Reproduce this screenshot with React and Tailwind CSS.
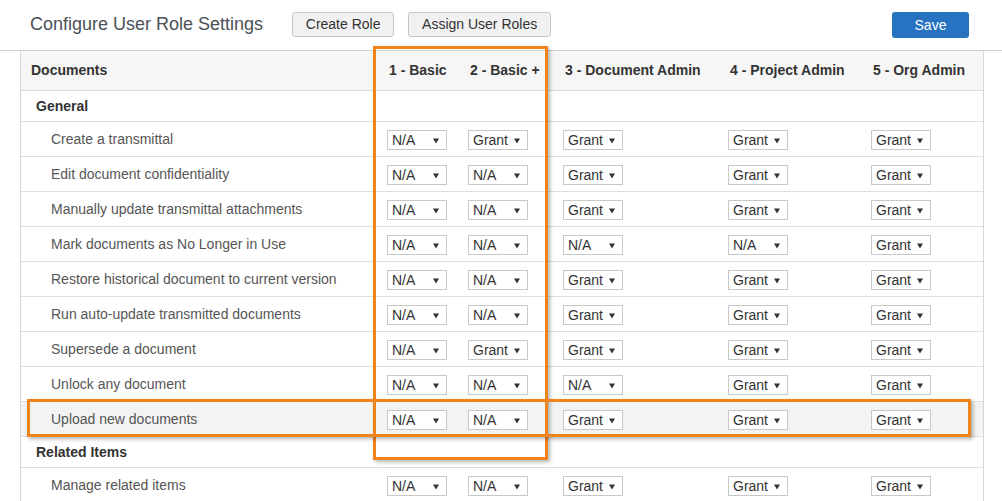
import React from "react";

const COLS = "grid grid-cols-[359px_81px_95px_165px_143px_119px]";
const ROLES = ["1 - Basic", "2 - Basic +", "3 - Document Admin", "4 - Project Admin", "5 - Org Admin"];

const sections = [
  {
    name: "General",
    rows: [
      ["Create a transmittal", "N/A", "Grant", "Grant", "Grant", "Grant"],
      ["Edit document confidentiality", "N/A", "N/A", "Grant", "Grant", "Grant"],
      ["Manually update transmittal attachments", "N/A", "N/A", "Grant", "Grant", "Grant"],
      ["Mark documents as No Longer in Use", "N/A", "N/A", "N/A", "N/A", "Grant"],
      ["Restore historical document to current version", "N/A", "N/A", "Grant", "Grant", "Grant"],
      ["Run auto-update transmitted documents", "N/A", "N/A", "Grant", "Grant", "Grant"],
      ["Supersede a document", "N/A", "Grant", "Grant", "Grant", "Grant"],
      ["Unlock any document", "N/A", "N/A", "N/A", "Grant", "Grant"],
      ["Upload new documents", "N/A", "N/A", "Grant", "Grant", "Grant", true],
    ],
  },
  {
    name: "Related Items",
    rows: [["Manage related items", "N/A", "N/A", "Grant", "Grant", "Grant"]],
  },
];

function Select({ value }) {
  return (
    <div className="relative w-[60px] h-[20px] mt-[2px] border border-[#c8c8c8] bg-white flex items-center pl-[4px] text-[14px] text-[#333]">
      {value}
      <svg className="absolute right-[7px] top-[7px]" width="6" height="6" viewBox="0 0 6 6">
        <polygon points="0,0.5 6,0.5 3,5.5" fill="#333" />
      </svg>
    </div>
  );
}

function Button({ children, className }) {
  return (
    <button className={"h-[25px] rounded-[3px] border border-[#c4c8cc] bg-[#f1f1f1] text-[14px] text-[#333] " + className}>
      {children}
    </button>
  );
}

export default function App() {
  return (
    <div className="relative w-[1002px] h-[501px] overflow-hidden bg-white font-['Liberation_Sans',Arial,sans-serif]">
      <header className="h-[51px] border-b border-[#cfcfcf] flex items-start pt-[12px] pl-[30px] pr-[33px]">
        <div className="h-[25px] flex items-center text-[18px] text-[#4b5058]">Configure User Role Settings</div>
        <Button className="ml-[29px] w-[102px]">Create Role</Button>
        <Button className="ml-[14px] w-[143px]">Assign User Roles</Button>
        <button className="ml-auto w-[77px] h-[26px] rounded-[3px] bg-[#2873c1] text-white text-[14px]">Save</button>
      </header>

      <div className="ml-[20px] w-[964px] border-x border-[#d6d6d6]">
        <div className={COLS + " h-[40px] items-center bg-[#f6f6f6] border-b border-[#d9d9d9] text-[14px] font-bold text-[#333]"}>
          <div className="pl-[10px]">Documents</div>
          {ROLES.map((r) => (
            <div key={r} className="pl-[9px] whitespace-nowrap">{r}</div>
          ))}
        </div>

        {sections.map((s) => (
          <React.Fragment key={s.name}>
            <div className="h-[31px] flex items-center pl-[15px] border-b border-[#dedede] text-[14px] font-bold text-[#333]">
              {s.name}
            </div>
            {s.rows.map((row) => (
              <div
                key={row[0]}
                className={COLS + " h-[35px] items-center border-b border-[#dedede] text-[14px] " + (row[6] ? "bg-[#f3f3f3]" : "")}
              >
                <div className="pl-[30px] text-[#555]">{row[0]}</div>
                {row.slice(1, 6).map((v, i) => (
                  <div key={i} className="pl-[7px]">
                    <Select value={v} />
                  </div>
                ))}
              </div>
            ))}
          </React.Fragment>
        ))}
      </div>

      {/* highlight callouts */}
      <div className="absolute left-[373px] top-[46px] w-[175px] h-[414px] border-[3px] border-[#f0841c] shadow-[2px_2px_4px_rgba(0,0,0,0.3)]" />
      <div className="absolute left-[27px] top-[399px] w-[944px] h-[38px] border-[3px] border-[#f0841c] shadow-[2px_2px_4px_rgba(0,0,0,0.3)]" />
    </div>
  );
}
